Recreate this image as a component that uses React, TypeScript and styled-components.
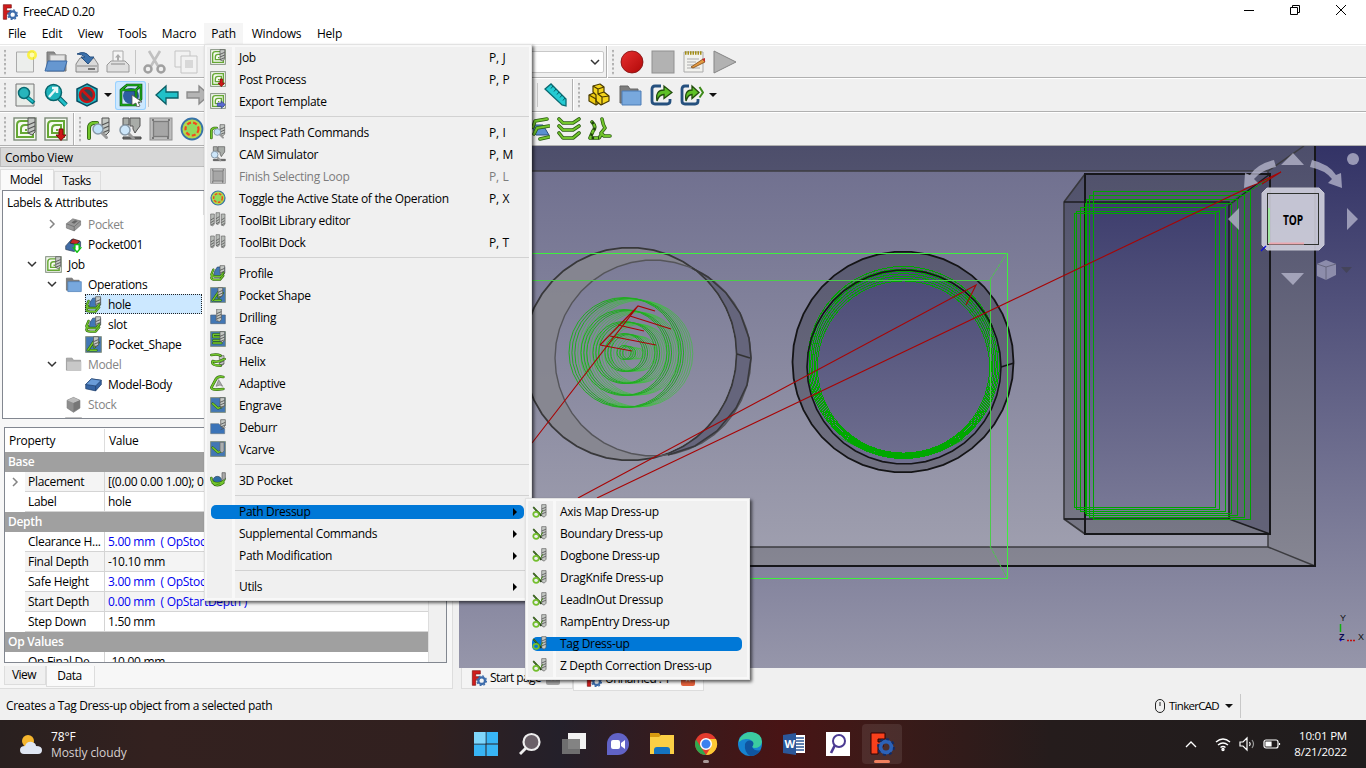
import React from "react";
import styled, { createGlobalStyle, css } from "styled-components";

const Global = createGlobalStyle`
  * { box-sizing: border-box; }
  body { margin: 0; overflow: hidden; background: #f0f0f0; color: #000;
    font: 12px/16px "Open Sans", "Noto Sans", sans-serif; letter-spacing: -0.2px; }
  svg { display: block; flex: none; }
`;

const Window = styled.div`
  position: relative; width: 1366px; height: 768px; overflow: hidden;
  display: flex; flex-direction: column; white-space: nowrap; cursor: default;
`;
const TitleBar = styled.header`
  height: 23px; flex: none; background: #fff; display: flex; align-items: center; padding-left: 2px; gap: 5px; letter-spacing: -0.3px;
`;
const Spacer = styled.div`flex: 1;`;
const WindowButtons = styled.div`
  display: flex; height: 20px; align-items: center;
  > span { width: 46px; display: flex; justify-content: center; }
  margin: -3px 2px 0 0;
`;
const MenuBar = styled.nav`height: 22px; flex: none; background: #fff; display: flex; border-bottom: 1px solid #e8e8e8;`;
const MenuTitle = styled.span<{ $w: number; $open?: boolean }>`
  width: ${p => p.$w}px; text-align: center; line-height: 22px; background: ${p => (p.$open ? "#f5f5f5" : "transparent")};
`;

const ToolRow = styled.div<{ $h?: number }>`
  height: ${p => p.$h || 34}px; flex: none; display: flex; align-items: center; background: #f0f0f0;
  border-top: 1px solid #fff; border-bottom: 1px solid #b0b0b0;
`;
const Grip = styled.div<{ $w: number }>`
  width: ${p => p.$w}px; height: 26px; flex: none;
  background: radial-gradient(circle at 2px 2px, #b0b0b0 1px, transparent 1.4px) 3px 0 / 4px 4.4px repeat-y;
`;
const Slot = styled.div<{ $on?: boolean }>`
  width: 31px; height: 29px; flex: none; display: flex; align-items: center; justify-content: center;
  border-radius: 3px;
  ${p => p.$on && css`background: #cce8ff; box-shadow: inset 0 0 0 1px #99d1ff;`}
`;
const Arrow = styled.div`
  width: 12px; display: flex; justify-content: center; flex: none;
  &::after { content: ""; border: 4px solid transparent; border-top-color: #111; border-bottom: 0; }
`;
const Divider = styled.div`width: 5px; height: 24px; flex: none; border-left: 1px solid #c5c5c5; margin-left: 2px; margin-right: -2px;`;
const Break = styled.div`width: 2px; height: 32px; flex: none; border-left: 1px solid #b0b0b0; border-right: 1px solid #fff; margin: 0 0 0 1px;`;
const Gap = styled.div<{ $w: number }>`width: ${p => p.$w}px; flex: none;`;
const Combo = styled.div`
  width: 204px; height: 22px; background: #fff; border: 1px solid #c8c8c8; border-radius: 2px;
  display: flex; align-items: center; justify-content: flex-end; padding-right: 3px;
`;

const Body = styled.main`height: 543px; flex: none; display: flex;`;
const Dock = styled.aside`width: 453px; flex: none; display: flex; flex-direction: column; border-right: 1px solid #ddd; box-shadow: inset 0 -1px #ddd; background: #f7f7f7;`;
const DockTitle = styled.div`height: 20px; margin-top: 1px; flex: none; background: #d8d8d8; border: 1px solid #bcbcbc; padding-left: 4px; line-height: 19px;`;
const TabStrip = styled.div`height: 23px; flex: none; display: flex; align-items: flex-end; background: #f0f0f0;`;
const Tab = styled.div<{ $w: number; $h: number; $on?: boolean }>`
  width: ${p => p.$w}px; height: ${p => p.$h}px; line-height: ${p => p.$h - 1}px; text-align: center; letter-spacing: -0.5px;
  border: 1px solid #ddd; border-bottom: 0; background: ${p => (p.$on ? "#fafafa" : "#f0f0f0")}; padding-right: 2px;
`;
const Tree = styled.div`
  height: 229px; margin: 0 6px 0 2px; flex: none; border: 1px solid #828790; background: #fff; overflow: hidden;
`;
const TreeHeader = styled.div`height: 24px; width: 201px; line-height: 24px; padding-left: 4px; border-right: 1px solid #e0e0e0; margin-bottom: -1px; letter-spacing: -0.3px;`;
const TreeRow = styled.div<{ $indent: number; $dim?: boolean }>`
  height: 20px; padding-left: ${p => p.$indent}px; display: flex; align-items: center; gap: 4px; letter-spacing: -0.33px;
  color: ${p => (p.$dim ? "#848484" : "#000")};
`;
const Twist = styled.span<{ $pale?: boolean }>`width: 14px; display: flex; justify-content: center; flex: none; margin-right: 2px; opacity: ${p => (p.$pale ? 0.6 : 1)};`;
const TreeLabel = styled.span<{ $sel?: boolean }>`
  height: 20px; line-height: 19px; display: flex; align-items: center; gap: 6px; padding-right: 3px;
  ${p => p.$sel && css`width: 117px; background: #cce8ff; outline: 1px dotted #222; outline-offset: -1px;`}
`;
const Props = styled.div`
  height: 236px; margin: 8px 5px 0 4px; flex: none; border: 1px solid #828790; background: #fff; overflow: hidden; display: flex;
`;
const PropTable = styled.div`flex: 1; padding-top: 1px; letter-spacing: -0.3px;`;
const Scroll = styled.div`width: 18px; background: #f0f0f0; border-left: 1px solid #ddd;`;
const PropHead = styled.div`height: 23px; display: flex; line-height: 23px;
  span { width: 100px; padding-left: 4px; border-right: 1px solid #ddd; } b { font-weight: 400; padding-left: 4px; }`;
const PropGroup = styled.div`height: 20px; background: #a0a0a0; color: #fff; font-weight: 600; line-height: 20px; padding-left: 3px;`;
const PropRow = styled.div<{ $alt?: boolean; $blue?: boolean }>`
  height: 20px; line-height: 20px; display: flex;
  i { width: 20px; flex: none; display: flex; align-items: center; justify-content: center; opacity: .6; }
  span { width: 80px; padding-left: 3px; flex: none; border-right: 1px solid #d4d4d4; border-bottom: 1px solid #d4d4d4; background: ${p => (p.$alt ? "#f4f4f4" : "#fff")}; }
  b { flex: 1; font-weight: 400; padding-left: 3px; border-bottom: 1px solid #d4d4d4; white-space: pre;
    color: ${p => (p.$blue ? "#0000f0" : "#000")}; background: ${p => (p.$alt ? "#f4f4f4" : "#fff")}; }
`;
const BottomTabs = styled.div`height: 26px; padding: 3px 0 0 4px; display: flex; align-items: flex-start;`;
const BottomTab = styled(Tab)`border: 1px solid #ddd; border-top: 0;`;

const Mdi = styled.section`margin-left: 6px; width: 907px; display: flex; flex-direction: column;`;
const DocTabs = styled.div`height: 21px; display: flex; padding-left: 2px; align-items: flex-start;`;
const DocTab = styled.div<{ $w: number; $on?: boolean }>`
  width: ${p => p.$w}px; height: ${p => (p.$on ? 23 : 21)}px; border: 1px solid #ddd; border-top: 0;
  background: ${p => (p.$on ? "#fafafa" : "#f4f4f4")}; display: flex; align-items: center; padding-left: ${p => (p.$on ? 12 : 9)}px; gap: 3px;
  em { font-style: normal; margin-right: 2px; letter-spacing: -0.6px; }
`;
const CloseBox = styled.span<{ $c: string }>`
  width: 14px; height: 13px; background: ${p => p.$c}; border-radius: 2px; color: #fff; font-size: 11px; line-height: 12px; text-align: center;
`;
const StatusBar = styled.footer`height: 31px; flex: none; display: flex; align-items: center; padding: 2px 0 0 6px; letter-spacing: -0.37px;`;
const NavStyle = styled.div`
  display: flex; align-items: center; gap: 4px; margin-right: 125px; height: 24px; padding-right: 5px; border-right: 1px solid #c8c8c8;
  font-size: 11.5px; letter-spacing: -0.7px;
`;

const Menu = styled.div<{ $x: number; $y: number; $w: number }>`
  position: absolute; left: ${p => p.$x}px; top: ${p => p.$y}px; width: ${p => p.$w}px; padding: 2px; letter-spacing: -0.31px;
  background: linear-gradient(90deg, #f0f0f0 27px, #f8f8f8 27px, #f8f8f8 30px, #f0f0f0 30px) padding-box;
  border: 1px solid #e2e2e2; box-shadow: inset 0 0 0 2px #f8f8f8, 2px 2px 3px rgba(0,0,0,.6);
`;
const Item = styled.div<{ $dim?: boolean }>`
  height: 22px; display: flex; align-items: center; padding-left: 4px; color: ${p => (p.$dim ? "#7c7c7c" : "#000")};
`;
const ItemIcon = styled.span<{ $nudge: number }>`
  width: 28px; flex: none; display: flex;
  svg { margin: -2px 0 0 ${p => p.$nudge}px; }
`;
const Keys = styled.span`width: 40px; word-spacing: 1px;`;
const More = styled.span`
  width: 16px;
  &::after { content: ""; display: block; width: 0; border: 4px solid transparent; border-left-color: #000; border-right: 0; }
`;
const HotBar = styled.div`
  height: 14px; margin: 4px 5px 4px 4px; border-radius: 5px; background: #0078d7; display: flex; align-items: center;
  ${More} { width: 11px; }
`;
const Sep = styled.div`height: 9px; margin-left: 28px; padding-top: 3px; &::after { content: ""; display: block; border-top: 1px solid #d2d2d2; }`;

const Taskbar = styled.div`
  height: 48px; flex: none; display: flex; align-items: center; color: #fff;
  background: linear-gradient(90deg, #29201f 0, #33211f 150px, #31201f 430px, #24202a 560px, #3a1a1b 690px, #481415 780px, #3c1a18 880px, #251c1c 1050px, #1f1c1d);
`;
const Weather = styled.div`width: 450px; padding-left: 18px; display: flex; gap: 8px; align-items: center; line-height: 16px; letter-spacing: -0.1px;
  padding-top: 2px;
  small { font-size: 12px; display: block; color: #d6d0d0; }`;
const AppSlot = styled.div<{ $on?: boolean; $dot?: string }>`
  width: 40px; height: 40px; margin-right: 4px; display: flex; align-items: center; justify-content: center; border-radius: 4px;
  background: ${p => (p.$on ? "rgba(255,255,255,.09)" : "none")}; position: relative;
  &::after { content: ""; position: absolute; bottom: 1px; height: 3px; border-radius: 2px; width: ${p => (p.$on ? 16 : 6)}px; background: ${p => p.$dot || "transparent"}; }
`;
const Tray = styled.div`display: flex; align-items: center; gap: 8px; padding-right: 19px;`;
const Clock = styled.div`text-align: right; line-height: 16px; margin-left: 5px; font-size: 11.5px;`;

/* ---------- icons, 24-unit grid ---------- */
const Bit = ({ x = 15, y = 1, h = 17 }: { x?: number; y?: number; h?: number }) => (
  <g>
    <path d={`M${x} ${y}h7v${h - 3}l-3 3l-4-2z`} fill="#c4c8c4" stroke="#555" />
    <path d={`M${x} ${y + 7}l7-3M${x} ${y + 11}l7-3M${x} ${y + 15}l7-3`} stroke="#555" strokeWidth="1.3" />
  </g>
);
const Frame = ({ c = "#f5faf0" }: { c?: string }) => <rect x="1" y="1" width="22" height="22" fill={c} stroke="#7c8a78" strokeWidth="1.4" />;
const Nest = () => (
  <g fill="none" stroke="#66a834" strokeWidth="2">
    <path d="M4 20V8q0-4 4-4h12v16z" /><path d="M8 16v-4q0-4 4-4h5v8z" /><path d="M12 13h2" />
  </g>
);
const GP = ({ d, w = 2 }: { d: string; w?: number }) => (
  <g fill="none" strokeLinecap="round" strokeLinejoin="round">
    <path d={d} stroke="#2b5d10" strokeWidth={w + 1.6} /><path d={d} stroke="#73c62c" strokeWidth={w} />
  </g>
);
const Lens = ({ x, y, r = 5, c = "#bfe0f8" }: { x: number; y: number; r?: number; c?: string }) => (
  <g><path d={`M${x + r * 0.7} ${y + r * 0.7}l5 5`} stroke="#999" strokeWidth="3" strokeLinecap="round" /><circle cx={x} cy={y} r={r} fill={c} stroke="#8899a8" strokeWidth="1.5" /></g>
);
const Blue = "#4277b5";
const ART: Record<string, React.ReactNode> = {
  freecad: <g><path d="M2 1h12v5H7v4h5v5H7v8H2z" fill="#d01c1c" stroke="#7a1010" /><circle cx="16" cy="16" r="5" fill="none" stroke="#3d6cab" strokeWidth="3.4" /><circle cx="16" cy="16" r="7.2" fill="none" stroke="#3d6cab" strokeWidth="2" strokeDasharray="2.8 2.85" /></g>,
  new: <g><path d="M3.500 2h17v20h-17z" fill="#eceeec" stroke="#aaa" /><circle cx="19" cy="5" r="5" fill="#fff200" opacity=".7" /><circle cx="19" cy="5" r="2.4" fill="#fffcb0" /></g>,
  open: <g><path d="M3 2h7l2 3h10v16H3z" fill="#8c8c8c" stroke="#777" /><path d="M6 5h15v7H6z" fill="#e4e4e4" stroke="#aaa" /><path d="M4 11h19l-3 10H1z" fill="#6697d0" stroke="#3d6ba5" /></g>,
  save: <g><path d="M1 14l4-6h14l4 6v8H1z" fill="#dadada" stroke="#888" /><path d="M2 16h20" stroke="#888" /><path d="M13 19h7" stroke="#777" strokeWidth="2" /><path d="M2 4q8-4 13 3h4l-6 7l-7-7h4q-3-3-8-3z" fill="#3c72ad" stroke="#285080" /></g>,
  print: <g><path d="M7 1h10v12H7z" fill="#f5f5f5" stroke="#aaa" /><path d="M12 4l3 3.500h-2v3h-2v-3H9z" fill="#aaa" /><path d="M1 15l4-4h14l4 4v7H1z" fill="#e0e0e0" stroke="#999" /><path d="M5 13h14v2H5z" fill="#b4b4b4" /></g>,
  cut: <g fill="none" stroke="#a0a0a0" strokeWidth="2.500"><path d="M6 1l9 15M17 1L8 16" stroke="#c0c0c0" strokeWidth="2.600" /><circle cx="5" cy="19" r="3.500" /><circle cx="18" cy="19" r="3.500" /></g>,
  copy: <g fill="#f2f2f2" stroke="#c4c4c4"><path d="M1 1h15v16H1z" /><path d="M7 6h16v17H7z" /><path d="M11 10h8v8h-8z" fill="#d8d8d8" stroke="none" /></g>,
  fitall: <g><path d="M3 1h18v22H3z" fill="#e8ece8" stroke="#777" /><path d="M14 14l7 6" stroke="#05767e" strokeWidth="4" /><path d="M14 14l6 5" stroke="#22bfc8" strokeWidth="2" /><circle cx="11" cy="10" r="5.500" fill="#27b5bc" stroke="#096a72" strokeWidth="1.500" /></g>,
  fitsel: <g><path d="M14 14l8 8" stroke="#045e66" strokeWidth="5" /><path d="M14 14l8 8" stroke="#22bfc8" strokeWidth="3" /><circle cx="9.500" cy="9.500" r="8" fill="#1fb4bc" stroke="#07656c" strokeWidth="1.500" /><path d="M5 14l7-8M8 5h5v5" stroke="#e8f8f8" strokeWidth="2.500" fill="none" /></g>,
  style: <g><path d="M12 1l10 5v12l-10 5l-10-5V6z" fill="#1eb8c2" stroke="#0b4f63" strokeWidth="1.500" /><circle cx="12" cy="12" r="7" fill="#2d4552" stroke="#c81414" strokeWidth="2.600" /><path d="M7 7l10 10" stroke="#c81414" strokeWidth="2.600" /></g>,
  bbox: <g><circle cx="12" cy="13" r="8" fill="#2d5ea2" /><path d="M2 7l6-5h14v14l-5 6H2zM2 7h15v15M17 7l5-5" fill="none" stroke="#063c06" strokeWidth="2.600" /><path d="M2 7l6-5h14v14l-5 6H2zM2 7h15v15M17 7l5-5" fill="none" stroke="#1eb21e" strokeWidth="1.400" /><path d="M13 12l10 7-4 0 2 4-3 1-1-4-4 2z" fill="#fff" stroke="#555" strokeWidth=".8" /></g>,
  back: <path d="M1 12L11 3v6h12v6H11v6z" fill="#20c0c8" stroke="#0b5e65" strokeWidth="1.300" />,
  fwd: <path d="M23 12L13 3v6H1v6h12v6z" fill="#b4b4b4" stroke="#8a8a8a" strokeWidth="1.300" />,
  record: <circle cx="12" cy="12" r="11" fill="url(#rec)" stroke="#7c0c0c" strokeWidth=".8" />,
  stop: <rect x="1" y="1" width="22" height="22" fill="#b2b2b2" stroke="#909090" />,
  note: <g><path d="M2 2h19v20H2z" fill="#f2f2ee" stroke="#aaa" /><path d="M3 3h17" stroke="#a38d14" strokeWidth="3.500" strokeDasharray="1.500 1" /><path d="M5 9h12M5 12h9M5 15h7M5 18h13" stroke="#aaa" /><path d="M9 17l12-8l2 3l-12 6z" fill="#e49a42" stroke="#7b4914" strokeWidth=".8" /><path d="M20 9l3-1v4z" fill="#c12a2a" /></g>,
  play: <path d="M1 1l22 11L1 23z" fill="#b2b2b2" stroke="#858585" />,
  ruler: <g><path d="M1 6l6-5l15 15v7l-4-1z" fill="#24cbd3" stroke="#0a6a72" strokeWidth="1.300" /><path d="M9 3L7 5.500M12 6l-2 2.500M15 9l-2 2.500M18 12l-2 2.500M21 15l-2 2.500" stroke="#0a5a62" /></g>,
  part: <g stroke="#4b3c00" strokeWidth="1.200" strokeLinejoin="round"><path d="M2 12l7-3l6 4v5l-6 4l-7-4z" fill="#f0cc10" /><path d="M6 3l7-2l4 3v5l5 4v5l-8 4l-5-4v-6l-3-3z" fill="#f5d51c" /><path d="M6 3l5 3l6-2M11 6v5l6-2M11 11l4 3l7-1M15 14v8M2 12l7 4v6" fill="none" /></g>,
  group: <g><path d="M2 3h8l2 3h8v14H2z" fill="#7d7d7d" stroke="#666" /><path d="M4 8h19v14H4z" fill="#78a8dd" stroke="#4d7db5" /></g>,
  link: <g><path d="M12 3H6q-3 0-3 3v12q0 3 3 3h12q3 0 3-3v-2" fill="none" stroke="#25507e" strokeWidth="2.800" /><path d="M8 18q-2-11 7-11V3l8 6.500l-8 6v-4q-5 0-7 6.500z" fill="#5ec127" stroke="#214c0c" strokeWidth="1.300" /></g>,
  links: <g><path d="M9 3H5q-3 0-3 3v12q0 3 3 3h10q3 0 3-3v-2" fill="none" stroke="#25507e" strokeWidth="2.800" /><path d="M6 18q-2-11 6-11V3l7 6.500l-7 6v-4q-4 0-6 6.500z" fill="#5ec127" stroke="#214c0c" strokeWidth="1.300" /><path d="M19.500 4l3.500 5.500l-3.500 5" fill="none" stroke="#3d8a19" strokeWidth="2" /></g>,
  job: <g><Frame /><Nest /><Bit h={17} /></g>,
  post: <g><Frame /><Nest /><path d="M15 12h4v6h3l-5 5.500L12 18h3z" fill="#cf1717" stroke="#760b0b" /></g>,
  exportT: <g><Frame /><Nest /><path d="M11 15h6v-3l6 5.500l-6 5.500v-3h-6z" fill="#5a6ad2" stroke="#303c8e" /></g>,
  inspect: <g><GP d="M2 21V11q0-4 4-5h4" w={2.400} /><Bit /><Lens x={11} y={12} /></g>,
  sim: <g><path d="M5 1h6v7H5zM12 1h10v8l-3 4l-2 3l-2-4V9h-3z" fill="#a8aca8" stroke="#555" /><path d="M5 20h18v2H5z" fill="#777" stroke="#444" /><Lens x={7} y={13} c="#cde6fa" /></g>,
  loop: <g><rect x="1" y="1" width="22" height="22" fill="#bdbdbd" stroke="#8f8f8f" /><rect x="4.500" y="4.500" width="15" height="15" fill="#a6a6a6" stroke="#7c7c7c" strokeWidth="1.300" /><path d="M3 3h2M19 3h2M3 21h2M19 19v3" stroke="#777" strokeWidth="2" /></g>,
  toggle: <g><circle cx="12" cy="12" r="10.500" fill="#b3d94c" stroke="#3873a8" strokeWidth="1.800" /><circle cx="12" cy="12" r="6.500" fill="#8fdc5c" stroke="#f04a1c" strokeWidth="2.200" strokeDasharray="4 2.200" /></g>,
  bits: <g>{[[1, 3], [9, 1], [17, 3]].map(([x, y]) => <g key={x}><path d={`M${x} ${y}h5.500v15l-2.500 3l-3-2z`} fill="#b8bcb8" stroke="#666" /><path d={`M${x} ${y + 9}l5-3M${x} ${y + 13}l5-3M${x} ${y + 17}l5-3`} stroke="#555" strokeWidth="1.200" /></g>)}</g>,
  profile: <g><path d="M7 9l4-6h11v9l-6 6H6z" fill={Blue} stroke="#223f66" /><Bit h={14} /><GP d="M5 7L2 14q0 3 5 3h9l4-5M4 14L2 19q0 3 6 3h7l5-6" w={1.800} /></g>,
  pocket: <g><Frame c={Blue} /><GP d="M4 20l9-13v9l6-7M7 20h9" /><Bit x={12} h={14} /></g>,
  drill: <g><path d="M1 9h8v9h7V9h7v13H1z" fill={Blue} stroke="#4d6078" /><Bit x={10} y={0} h={19} /></g>,
  face: <g><Frame c={Blue} /><GP d="M17 5H5v4h11M5 14h12M17 18H5" w={2} /><Bit h={16} /></g>,
  helix: <g><Bit x={14} y={4} h={15} /><GP d="M2 3q9-2 14 1M22 9q-11 6-18 3q-3 7 12 7" w={2.200} /></g>,
  adaptive: <g><GP d="M20 3q-8-2-11 3L2 19q1 3 8 3l10-1" w={2.400} /><path d="M9 17l4-10l6 10l-4-2z" fill="#aaa" stroke="#777" /></g>,
  engrave: <g><Frame c={Blue} /><GP d="M4 10l8 7l5-2" w={2.200} /><Bit h={15} /></g>,
  deburr: <g><path d="M1 7h12l9 8v7H1z" fill="#3a73b8" stroke="#6c7a88" /><Bit x={16} h={12} /></g>,
  vcarve: <g><Frame c={Blue} /><GP d="M4 10l8 7l6-2" w={2.200} /><path d="M15 2h6v13l-3 3l-3-3z" fill="#aaaeb0" stroke="#666" /></g>,
  pocket3d: <g><circle cx="11" cy="13" r="6.500" fill="#2e6ca5" stroke="#33475a" /><GP d="M2 9q0 8 9 8t11-7M4 16q6 8 16 0" w={2.200} /><path d="M18 1h5v9l-3 2l-2-2z" fill="#aaa" stroke="#555" /></g>,
  dress: <g><Bit h={20} x={15.500} /><path d="M2 5l13 14" stroke="#223a12" strokeWidth="2.600" /><ellipse cx="6.500" cy="16.500" rx="4.500" ry="4" fill="none" stroke="#74bf2e" strokeWidth="2.800" /><path d="M2 5l12 11l3-6" stroke="#4d8a24" strokeWidth="1.600" fill="none" /></g>,
  path1: <g><path d="M5 8h12l6 10H10z" fill="#5a90d0" stroke="#28507e" /><GP d="M21 2l-12 2l-2 6M23 9l-12 2l-3 6M23 20l-9 2" /></g>,
  path2: <GP d="M2 2l4 4h10l6-4M2 9l4 4h10l6-4M2 16l4 5h10l6-5" w={2} />,
  path3: <g><GP d="M4 5q5 5 1 9l-3 7h9l2-3M14 2q1 6 3 9l-4 5l3 3h6" w={2} /><path d="M4 5q5 5 1 9l-3 7h9" fill="none" stroke="#1d420c" strokeWidth="2.400" strokeDasharray="2.500 4" /></g>,
  bodyGrey: <g><path d="M2 11l9-7l11 3v6l-9 8l-11-4z" fill="#999" stroke="#777" /><path d="M2 11l11 4l9-8M13 15v6" stroke="#666" fill="none" /><path d="M9 9l5-3l4 1l-5 4z" fill="#666" /></g>,
  pocketRed: <g><path d="M1 14l8-9l13 3v7l-9 7L1 19z" fill="#426da6" stroke="#2c4058" /><path d="M7 10l4-6l10 3l-5 5z" fill="#c42727" stroke="#222" /><path d="M14 12h6v5h2l-5 6-5-6h2z" fill="#fff" stroke="#10c010" strokeWidth="2" /></g>,
  groupGrey: <g><path d="M2 3h8l2 3h10v14H2z" fill="#ababab" stroke="#8d8d8d" /><path d="M3 8h20v13H3z" fill="#c8c8c8" /></g>,
  body: <g><path d="M1 12l8-8l14 2v6l-8 9l-14-3z" fill="#3564a3" stroke="#1f3f6b" /><path d="M1 12l8-8l14 2l-8 8z" fill="#6a9cd8" stroke="#1f3f6b" /><path d="M15 14v7" stroke="#1f3f6b" /></g>,
  cube: <g><path d="M3 6l9-4l9 4v11l-9 6l-9-6z" fill="#8e8e8e" stroke="#777" /><path d="M3 6l9 4l9-4l-9-4z" fill="#bbb" /><path d="M12 10v12l9-5V6z" fill="#777" /></g>,
  sheet: <path d="M1 3h22v20H1zM8 3v20M1 8h22" fill="#fff" stroke="#888" strokeWidth="1.500" />,
};
const Icon = ({ n, s = 24 }: { n: string; s?: number }) => <svg width={s} height={s} viewBox="0 0 24 24" fill="none">{ART[n]}</svg>;
const Chevron = ({ d }: { d: string }) => <svg width="10" height="10" viewBox="0 0 10 10" fill="none" stroke="#333" strokeWidth="1.500"><path d={d} /></svg>;
const DOWN = "M1 3l4 4l4-4", RIGHT = "M3 1l4 4l-4 4";

/* ---------- 3D view ---------- */
const ngon = (cx: number, cy: number, r: number, n = 42) =>
  Array.from({ length: n }, (_, i) => `${(cx + r * Math.cos((i * 2 * Math.PI) / n)).toFixed(1)},${(cy + r * Math.sin((i * 2 * Math.PI) / n)).toFixed(1)}`).join(" ");

const SLOT_RECTS = [
  [1074.5, 213.5, 1215.5, 507.5], [1076.5, 211.5, 1219.5, 509.5], [1080.5, 207.5, 1225.5, 511.5], [1085.5, 203.5, 1231.5, 513.5],
  [1086.5, 199.5, 1237.5, 515.5], [1089.5, 195.5, 1244.5, 517.5], [1093.5, 191.5, 1250.5, 519.5],
];

const Scene = () => (
  <svg width="907" height="522" viewBox="459 146 907 522" fill="none">
    <defs>
      <linearGradient id="bg" gradientUnits="userSpaceOnUse" x1="0" y1="146" x2="0" y2="668"><stop stopColor="#333366" /><stop offset="1" stopColor="#9696aa" /></linearGradient>
      <linearGradient id="face" gradientUnits="userSpaceOnUse" x1="0" y1="171" x2="0" y2="546"><stop stopColor="#717190" /><stop offset="1" stopColor="#9e9eae" /></linearGradient>
      <linearGradient id="side" gradientUnits="userSpaceOnUse" x1="0" y1="146" x2="0" y2="566"><stop stopColor="#4d4e6b" /><stop offset="1" stopColor="#868692" /></linearGradient>
      <linearGradient id="wall" gradientUnits="userSpaceOnUse" x1="0" y1="174" x2="0" y2="534"><stop stopColor="#51526c" /><stop offset="1" stopColor="#777785" /></linearGradient>
      <linearGradient id="rec" x2="1" y2="1"><stop stopColor="#e83030" /><stop offset="1" stopColor="#b00808" /></linearGradient>
      <clipPath id="cA"><circle cx="630" cy="354" r="105.500" /></clipPath>
    </defs>
    <rect x="459" y="146" width="907" height="522" fill="url(#bg)" />
    <rect x="459" y="146" width="856" height="420" fill="url(#side)" />
    <rect x="459" y="171" width="809" height="376" fill="url(#face)" />
    <path d="M459 171H1268V547H459M1268 171L1304 146M1268 547L1315 566" stroke="#3c3c40" strokeWidth="1.500" />
    <path d="M1315 146V566H459" stroke="#17171a" strokeWidth="2" />

    {/* blind pocket */}
    <polygon points={ngon(653, 358, 98)} fill="#65657c" />
    <polygon points={ngon(630, 354, 106.500)} fill="#86868f" fillOpacity=".9" stroke="#38383a" strokeWidth="1.800" />
    <polygon points={ngon(653, 358, 98)} fill="url(#face)" clipPath="url(#cA)" />
    <polygon points={ngon(653, 358, 98)} stroke="#55555a" strokeWidth="1.400" />
    <path d="M692 268L708 277L726 293L740 313L749 338L751 358L747 385L736 408L717 431L695 446L668 455" stroke="#38383c" strokeWidth="1.600" />
    <path d="M737 354L750 358" stroke="#333" strokeWidth="1.500" />
    {[6, 5, 4, 3, 2, 1, 0].map(l => [55, 43, 31, 19, 7].map(r => (
      <circle key={`${l}-${r}`} cx={624 + l * 2.600} cy={352.500 + l * 0.200} r={r - l * 0.300} stroke={l > 2 ? "#3cc03c" : "#1fae1f"} strokeWidth={l > 2 ? 0.8 : 1} strokeOpacity={l > 2 ? 0.85 : 1} />
    )))}
    {/* through hole */}
    <polygon points={ngon(903, 362, 110.500)} fill="url(#wall)" stroke="#141416" strokeWidth="1.800" />
    <polygon points={ngon(904, 367, 97)} fill="url(#bg)" />
    {[0, 1, 2, 3, 4, 5, 6].map(i => <polygon key={i} points={ngon(903.5, 362.5 + i * 0.75, 96 - i * 1.65, 60)} stroke="#00a800" strokeWidth="1" shapeRendering="crispEdges" />)}
    <path d="M833 433Q903 482 974 433Q903 478 833 433Z" fill="#00a800" />
    <polygon points={ngon(904, 367, 97)} stroke="#141416" strokeWidth="1.600" />
    <path d="M1001 367L1014 363" stroke="#141416" strokeWidth="1.500" />

    {/* slot */}
    <path d="M1064 202L1085 174H1270V534H1085L1064 519Z" fill="url(#wall)" />
    <rect x="1085" y="202" width="144" height="317" fill="url(#bg)" />
    <path d="M1229 202V519L1270 534V174Z" fill="#40405e" fillOpacity=".35" />
    <path d="M1085 174L1064 202V519L1085 534M1064 519H1085" stroke="#38383c" strokeWidth="1.600" />
    <path d="M1064 202H1229V519H1064M1229 519L1270 534M1229 205L1270 174" stroke="#1c1c20" strokeWidth="1.500" />
    <rect x="1085" y="174" width="185" height="360" stroke="#17171a" strokeWidth="2" />
    <g shapeRendering="crispEdges">
      {SLOT_RECTS.map(([a, b, c, d]) => <path key={a} d={`M${a} ${b}H${c}V${d}H${a}Z`} stroke="#00a400" />)}
    </g>
    <path d="M1215 213L1270 178" stroke="#00a800" strokeDasharray="3 1" />

    {/* stock box */}
    <g shapeRendering="crispEdges">
      <path d="M459 253.500H1007.500V578.500H459" stroke="#3df03d" />
      <path d="M459 280.500H990.500V546" stroke="#4acb4a" />
    </g>
    <path d="M990 280L1007 253M990 546L1007 578" stroke="#4acb4a" strokeDasharray="4 1" />

    {/* rapid moves */}
    <g stroke="#a80404" strokeWidth="1.100">
      <path d="M532 443L638 306L655 311M600 345L638 306M600 345L632 351M610 336L656 345M618 325L644 331M630 316L671 329" />
      <path d="M578 498L976 285L966 305M597 498L1281 172L1262 184" />
    </g>

    {/* navigation cube */}
    <g fill="#b9b9cf" fillOpacity=".75">
      <path d="M1281 165L1293 153L1304 165ZM1281 273H1304L1293 285ZM1228 219L1239 208V230ZM1358 219L1347 208V230Z" />
      <circle cx="1353" cy="159" r="6" />
      <path d="M1274 160Q1257 164 1250 175L1245 173L1244 188L1258 183L1254 179Q1261 170 1276 167Z" />
      <path d="M1312 160Q1329 164 1336 175L1341 173L1342 188L1328 183L1332 179Q1325 170 1310 167Z" />
      <path d="M1317 264L1326 260L1336 264V275L1326 280L1317 276Z" fillOpacity=".6" />
    </g>
    <path d="M1317 264L1326 267L1336 264M1326 267V280" stroke="#67677e" />
    <path d="M1341 267H1352L1346.500 273Z" fill="#44445a" />
    <path d="M1267 188H1319L1324 193V245L1319 250H1267L1262 245V193Z" fill="#d0d0de" fillOpacity=".9" stroke="#c8c8d4" strokeLinejoin="round" />
    <rect x="1267.500" y="193.500" width="51" height="51" stroke="#2f332f" />
    <path d="M1269 208V243" stroke="#a0e8a0" strokeWidth="2" /><path d="M1269 243.500H1304" stroke="#eba8b0" strokeWidth="2" />
    <path d="M1261 251L1266 246" stroke="#1010d8" strokeWidth="1.500" />
    <text x="1283" y="224.500" fontFamily="Open Sans" fontWeight="700" fontSize="15" textLength="20" lengthAdjust="spacingAndGlyphs" fill="#000">TOP</text>

    {/* axis cross */}
    <path d="M1340.500 632V624" stroke="#10b010" strokeWidth="1.500" /><path d="M1347 640.500H1356" stroke="#c01010" strokeWidth="1.500" strokeDasharray="2 1" />
    <path d="M1340 641l2-2" stroke="#1010d8" strokeWidth="1.500" />
    <g fontFamily="Liberation Sans" fontSize="9" fill="#111"><text x="1340" y="621">Y</text><text x="1339" y="640" fill="#0a0a50" fontWeight="700">Z</text><text x="1358" y="640">X</text></g>
  </svg>
);

/* ---------- content ---------- */
type Entry = { i?: string; t: string; k?: string; dim?: boolean; more?: boolean; hot?: boolean } | null;
const PATH_MENU: Entry[] = [
  { i: "job", t: "Job", k: "P, J" }, { i: "post", t: "Post Process", k: "P, P" }, { i: "exportT", t: "Export Template" }, null,
  { i: "inspect", t: "Inspect Path Commands", k: "P, I" }, { i: "sim", t: "CAM Simulator", k: "P, M" },
  { i: "loop", t: "Finish Selecting Loop", k: "P, L", dim: true }, { i: "toggle", t: "Toggle the Active State of the Operation", k: "P, X" },
  { i: "bits", t: "ToolBit Library editor" }, { i: "bits", t: "ToolBit Dock", k: "P, T" }, null,
  { i: "profile", t: "Profile" }, { i: "pocket", t: "Pocket Shape" }, { i: "drill", t: "Drilling" }, { i: "face", t: "Face" }, { i: "helix", t: "Helix" },
  { i: "adaptive", t: "Adaptive" }, { i: "engrave", t: "Engrave" }, { i: "deburr", t: "Deburr" }, { i: "vcarve", t: "Vcarve" }, null,
  { i: "pocket3d", t: "3D Pocket" }, null,
  { t: "Path Dressup", more: true, hot: true }, { t: "Supplemental Commands", more: true }, { t: "Path Modification", more: true }, null,
  { t: "Utils", more: true },
];
const DRESSUPS: Entry[] = ["Axis Map Dress-up", "Boundary Dress-up", "Dogbone Dress-up", "DragKnife Dress-up", "LeadInOut Dressup", "RampEntry Dress-up", "Tag Dress-up", "Z Depth Correction Dress-up"]
  .map(t => ({ i: "dress", t, hot: t === "Tag Dress-up" }));

const Popup = ({ x, y, w, entries, size = 16, nudge = 0 }: { x: number; y: number; w: number; entries: Entry[]; size?: number; nudge?: number }) => (
  <Menu $x={x} $y={y} $w={w}>
    {entries.map((e, n) => {
      if (!e) return <Sep key={n} />;
      const inner = <><ItemIcon $nudge={nudge}>{e.i && <Icon n={e.i} s={size} />}</ItemIcon>{e.t}<Spacer />{e.k && <Keys>{e.k}</Keys>}{e.more && <More />}</>;
      return e.hot ? <HotBar key={n}>{inner}</HotBar> : <Item key={n} $dim={e.dim}>{inner}</Item>;
    })}
  </Menu>
);
const Slots = ({ names }: { names: string[] }) => <>{names.map((n, i) => <Slot key={i} $on={n === "bbox"}><Icon n={n} /></Slot>)}</>;

const TREE: [number, string | null, string, string, boolean?, boolean?][] = [
  [43, RIGHT, "bodyGrey", "Pocket", true], [43, null, "pocketRed", "Pocket001"], [23, DOWN, "job", "Job"], [43, DOWN, "group", "Operations"],
  [63, null, "profile", "hole", false, true], [63, null, "profile", "slot"], [63, null, "pocket", "Pocket_Shape"],
  [43, DOWN, "groupGrey", "Model", true], [63, null, "body", "Model-Body"], [43, null, "cube", "Stock", true], [43, null, "sheet", ""],
];
const Prop = ({ n, v, alt, blue, ex }: { n: string; v: string; alt?: boolean; blue?: boolean; ex?: boolean }) => (
  <PropRow $alt={alt} $blue={blue}><i>{ex && <Chevron d={RIGHT} />}</i><span>{n}</span><b>{v}</b></PropRow>
);

export default function App() {
  return (
    <Window>
      <Global />
      <TitleBar>
        <Icon n="freecad" s={16} />FreeCAD 0.20<Spacer />
        <WindowButtons>
          {["M1 6.500H11", "M1.500 3.500h7v7h-7zM3.500 3.500v-2h7v7h-2", "M1 1L11 11M11 1L1 11"].map(d => (
            <span key={d}><svg width="12" height="12" fill="none" stroke="#000" strokeWidth="1"><path d={d} /></svg></span>
          ))}
        </WindowButtons>
      </TitleBar>
      <MenuBar>
        {([["File", 34], ["Edit", 36], ["View", 41], ["Tools", 43], ["Macro", 50], ["Path", 39], ["Windows", 67], ["Help", 39]] as [string, number][])
          .map(([t, w]) => <MenuTitle key={t} $w={w} $open={t === "Path"}>{t}</MenuTitle>)}
      </MenuBar>
      <ToolRow $h={33}>
        <Grip $w={9} /><Slots names={["new", "open", "save", "print"]} /><Divider /><Gap $w={1} /><Slots names={["cut", "copy"]} />
        <Gap $w={199} /><Combo><Chevron d={DOWN} /></Combo><Gap $w={1} /><Break /><Grip $w={8} />
        <Slots names={["record", "stop", "note", "play"]} />
      </ToolRow>
      <ToolRow>
        <Grip $w={9} /><Slots names={["fitall", "fitsel", "style"]} /><Arrow /><Gap $w={1} /><Slots names={["bbox"]} /><Divider /><Slots names={["back", "fwd"]} />
        <Gap $w={322} /><Divider /><Slots names={["ruler"]} /><Break /><Grip $w={9} /><Slots names={["part", "group", "link", "links"]} /><Arrow />
      </ToolRow>
      <ToolRow>
        <Grip $w={9} /><Slots names={["job", "post"]} /><Gap $w={1} /><Break /><Grip $w={8} /><Slots names={["inspect", "sim", "loop", "toggle"]} />
        <Gap $w={315} /><Slots names={["path1", "path2", "path3"]} />
      </ToolRow>
      <Body>
        <Dock>
          <DockTitle>Combo View</DockTitle>
          <TabStrip><Tab $w={54} $h={21} $on>Model</Tab><Tab $w={47} $h={19}>Tasks</Tab></TabStrip>
          <Tree>
            <TreeHeader>Labels &amp; Attributes</TreeHeader>
            {TREE.map(([ind, tw, ic, t, dim, sel]) => (
              <TreeRow key={t} $indent={ind - 1} $dim={dim}>
                <Twist $pale={tw === RIGHT}>{tw && <Chevron d={tw} />}</Twist>
                <TreeLabel $sel={sel}><Icon n={ic} s={17} />{t}</TreeLabel>
              </TreeRow>
            ))}
          </Tree>
          <Props>
            <PropTable>
              <PropHead><span>Property</span><b>Value</b></PropHead>
              <PropGroup>Base</PropGroup>
              <Prop n="Placement" v="[(0.00 0.00 1.00); 0.00 °; (0.00 mm  0.00 mm)]" alt ex />
              <Prop n="Label" v="hole" />
              <PropGroup>Depth</PropGroup>
              <Prop n="Clearance H..." v="5.00 mm  ( OpStockZMax )" blue />
              <Prop n="Final Depth" v="-10.10 mm" alt />
              <Prop n="Safe Height" v="3.00 mm  ( OpStockZMax )" blue />
              <Prop n="Start Depth" v="0.00 mm  ( OpStartDepth )" blue alt />
              <Prop n="Step Down" v="1.50 mm" />
              <PropGroup>Op Values</PropGroup>
              <Prop n="Op Final De..." v="-10.00 mm" />
            </PropTable>
            <Scroll />
          </Props>
          <BottomTabs><BottomTab $w={42} $h={19}>View</BottomTab><BottomTab $w={49} $h={21} $on>Data</BottomTab></BottomTabs>
        </Dock>
        <Mdi>
          <Scene />
          <DocTabs>
            <DocTab $w={112}><Icon n="freecad" s={16} /><em>Start page</em><CloseBox $c="#a8a8a8">×</CloseBox></DocTab>
            <DocTab $w={131} $on><Icon n="freecad" s={16} /><em>Unnamed : 1*</em><CloseBox $c="#e2603c">×</CloseBox></DocTab>
          </DocTabs>
        </Mdi>
      </Body>
      <StatusBar>
        Creates a Tag Dress-up object from a selected path<Spacer />
        <NavStyle>
          <svg width="10" height="14" fill="none" stroke="#222"><rect x=".5" y=".5" width="9" height="13" rx="4.500" /><path d="M5 3v4" /></svg>
          TinkerCAD<Arrow />
        </NavStyle>
      </StatusBar>
      <Taskbar>
        <Weather>
          <svg width="25" height="24" viewBox="0 0 25 24"><circle cx="10" cy="8" r="6" fill="#f5b62e" /><path d="M6 21q-4 0-4-4t5-4q2-5 7-4q4 1 4 4q6 0 6 4t-4 4z" fill="#dfe6f2" /></svg>
          <div>78°F<small>Mostly cloudy</small></div>
        </Weather>
        <Gap $w={16} />
        <AppSlot><svg width="24" height="24"><path d="M0 0h11.500v11.500H0zM12.500 0H24v11.500H12.500zM0 12.500h11.500V24H0zM12.500 12.500H24V24H12.500z" fill="#38b5f5" /><path d="M0 0h11.500v11.500H0z" fill="#7fd6fb" /></svg></AppSlot>
        <AppSlot><svg width="24" height="24" fill="#6a6068" stroke="#eee" strokeWidth="2.200"><circle cx="13.500" cy="10" r="8" /><path d="M8 16L2 22" strokeWidth="2.800" /></svg></AppSlot>
        <AppSlot><svg width="26" height="24"><path d="M7 1h18v16H7z" fill="#f2f2f2" /><path d="M1 7h18v15H1z" fill="#777" opacity=".9" /></svg></AppSlot>
        <AppSlot><svg width="24" height="24"><path d="M1 23V12a11 11 0 1 1 11 11z" fill="#6163c6" /><rect x="5" y="8" width="9" height="9" rx="2" fill="#fff" /><path d="M15 11l4-3v9l-4-3z" fill="#fff" /></svg></AppSlot>
        <AppSlot><svg width="24" height="24"><path d="M0 1h9l2 3v3H0z" fill="#d89a10" /><path d="M0 5h9l2-2h13v19H0z" fill="#fbcf45" /><path d="M4 22v-4q0-3 3-3h10q3 0 3 3v4z" fill="#1473c0" /></svg></AppSlot>
        <AppSlot $dot="#a99"><svg width="24" height="24"><circle cx="12" cy="12" r="11" fill="#e33b2e" /><path d="M2 7.500L8 17l4 6A11 11 0 0 1 2 7.500" fill="#2da94f" /><path d="M12 7h10a11 11 0 0 1-10 16l5-8z" fill="#fcc934" /><circle cx="12" cy="12" r="5.300" fill="#3c80ef" stroke="#fff" strokeWidth="1.500" /></svg></AppSlot>
        <AppSlot><svg width="24" height="24"><circle cx="12" cy="12" r="12" fill="#1683d0" /><path d="M1 8Q5 0 13 0q11 1 11 10q-1 6-8 6q-3-1-1-4q0-5-7-5q-4 0-7 3z" fill="#3ccba0" /><path d="M7 12q2-5 7-3q3 2 0 6q3 5 9 3q-4 6-11 6q-6-4-5-12" fill="#0f55a0" /></svg></AppSlot>
        <AppSlot><svg width="24" height="24"><path d="M11 3h12v18H11z" fill="#fff" /><path d="M14 6h8M14 9h8M14 12h8M14 15h8M14 18h8" stroke="#2b5797" strokeWidth="1.300" /><path d="M1 3l13-2v22L1 21z" fill="#2b579a" /><text x="2.500" y="16" fontSize="11" fontWeight="700" fill="#fff">W</text></svg></AppSlot>
        <AppSlot><svg width="24" height="24" fill="none" stroke="#4b3a92" strokeWidth="2"><rect width="24" height="24" fill="#fff" stroke="none" /><circle cx="13" cy="9" r="6" /><path d="M9 13L5 21" strokeWidth="2.600" /></svg></AppSlot>
        <AppSlot $on $dot="#f0805f"><svg width="25" height="24"><path d="M1 1h14v6H8v3h5v5H8v7H1z" fill="#f8401c" stroke="#300" /><circle cx="16" cy="15" r="5.500" fill="none" stroke="#2c62b8" strokeWidth="4" /><circle cx="16" cy="15" r="8" fill="none" stroke="#122c66" strokeWidth="2" strokeDasharray="3 3.280" /></svg></AppSlot>
        <Spacer />
        <Tray>
          <svg width="16" height="16" fill="none" stroke="#fff" strokeWidth="1.300"><path d="M3 11l5-5l5 5" /></svg>
          <Gap $w={-4} />
          <svg width="16" height="16" fill="none" stroke="#fff" strokeWidth="1.400"><path d="M1 6q7-6 14 0M3 9q5-4 10 0M5.500 11.500q2.500-2 5 0" /><circle cx="8" cy="13.500" r="1" /></svg>
          <svg width="16" height="16" fill="none" stroke="#fff" strokeWidth="1.200"><path d="M1 6h3l4-4v12l-4-4H1zM10.500 6q1.500 2 0 4" /><path d="M13 4q3 4 0 8" stroke="#999" /></svg>
          <svg width="18" height="16" fill="none" stroke="#fff" strokeWidth="1.200"><rect x="1" y="4" width="14" height="8" rx="2" /><path d="M3 6h5v4H3z" fill="#fff" /><path d="M16.500 7v2" /></svg>
          <Clock>10:01 PM<br />8/21/2022</Clock>
        </Tray>
      </Taskbar>
      <Popup x={204} y={44} w={328} entries={PATH_MENU} nudge={-1} />
      <Popup x={525} y={498} w={225} entries={DRESSUPS} size={15} />
    </Window>
  );
}
